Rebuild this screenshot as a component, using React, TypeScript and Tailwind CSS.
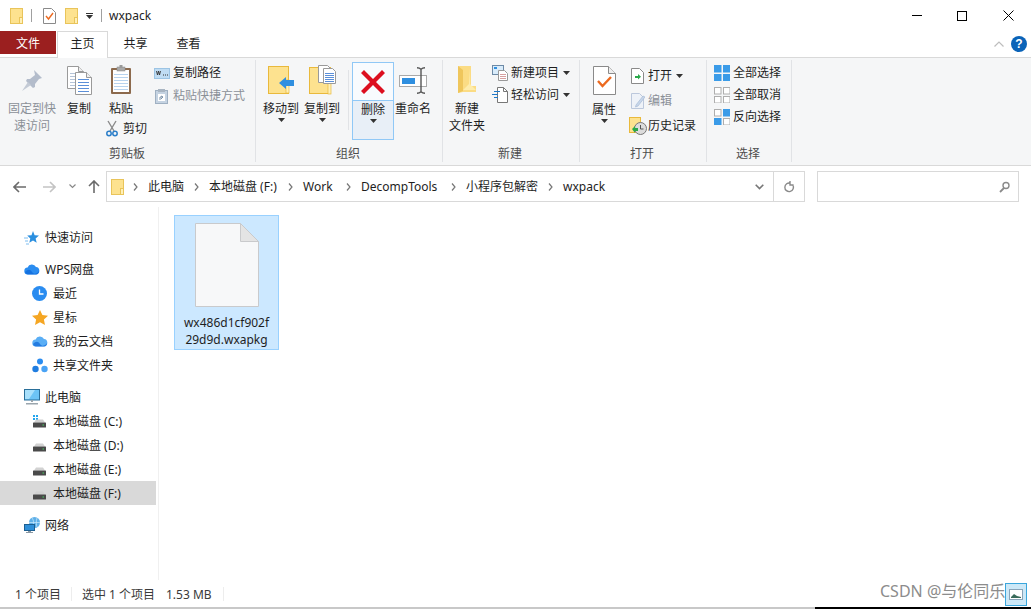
import React from "react";

const Sv = ({ w, h, children, className = "" }: { w: number; h: number; children: React.ReactNode; className?: string }) => (
  <svg width={w} height={h} viewBox={`0 0 ${w} ${h}`} className={`block shrink-0 ${className}`}>{children}</svg>
);

const Folder = ({ w = 13, h = 16 }: { w?: number; h?: number }) => (
  <Sv w={w} h={h}>
    <rect x=".5" y=".5" width={w - 1} height={h - 1} fill="#fde28f" stroke="#e9c45a" />
    <rect x={w - 3.5} y={h - 6.5} width="3" height="6" fill="#fff0b8" stroke="#e9c45a" />
  </Sv>
);
const Caret = ({ className = "" }: { className?: string }) => (
  <Sv w={7} h={4} className={className}><path d="M0 0h7L3.5 4z" fill="#333" /></Sv>
);
const PageLines = ({ x, y, blue = false }: { x: number; y: number; blue?: boolean }) => (
  <g>
    <path d={`M${x + .5} ${y + .5}h11l5 5v17h-16z`} fill="#fff" stroke="#9a9a9a" />
    <path d={`M${x + 11.5} ${y + .5}v5h5`} fill="#eee" stroke="#9a9a9a" />
    {[7, 10, 13, 16, 19].map((d) => <path key={d} d={`M${x + 3} ${y + d + .5}h11`} stroke={blue ? "#5b8fd8" : "#b5c4d8"} />)}
  </g>
);
const ICopy = () => (
  <Sv w={25} h={29}>
    <PageLines x={0} y={0} />
    <PageLines x={8} y={6} blue />
  </Sv>
);
const IPaste = () => (
  <Sv w={22} h={30}>
    <rect x="1" y="3" width="20" height="26" rx="1" fill="#8c6a4d" />
    <rect x="3" y="5" width="16" height="22" fill="#fff" />
    {[9, 12, 15, 18, 21, 24].map((d) => <path key={d} d={`M4 ${d + .5}h14`} stroke="#b8d3ee" />)}
    <rect x="7" y="2" width="8" height="4" fill="#a9a9a9" stroke="#888" strokeWidth=".5" />
    <rect x="9.5" y="0" width="3" height="3" fill="#999" />
  </Sv>
);
const IPin = () => (
  <Sv w={22} h={23}>
    <path d="M13 1l8 8-3 1-4 5 0 3-2 1-7-7 1-2 3 0 5-4z" fill="#b3bccb" />
    <path d="M7 13l-6 9 9-6z" fill="#c3cad5" />
  </Sv>
);
const ICut = () => (
  <Sv w={12} h={17}>
    <path d="M2 1l6 10M10 1L4 11" stroke="#8a8a8a" strokeWidth="1.4" fill="none" />
    <circle cx="3" cy="13.5" r="2.2" fill="none" stroke="#2b7ec9" strokeWidth="1.5" />
    <circle cx="9" cy="13.5" r="2.2" fill="none" stroke="#2b7ec9" strokeWidth="1.5" />
  </Sv>
);
const ICopyPath = () => (
  <Sv w={16} h={11}>
    <rect x=".5" y=".5" width="15" height="10" fill="#bfdcf3" stroke="#9cc4e4" />
    <path d="M2.5 3l1 4 1-4 1 4 1-4" stroke="#333" fill="none" strokeWidth=".9" />
    <path d="M9 7h1M11 7h1M13 7h1" stroke="#333" />
  </Sv>
);
const IPasteShortcut = () => (
  <Sv w={13} h={15}>
    <rect x=".5" y="1.5" width="12" height="13" fill="#c5d3e2" stroke="#9fb0c2" />
    <rect x="3" y="0" width="7" height="3" fill="#a9b5c2" />
    <rect x="3" y="5" width="7" height="7" fill="#fff" />
    <path d="M5 11V8h3M6 7l2 1-2 2" stroke="#7d93aa" fill="none" />
  </Sv>
);
const IMove = () => (
  <Sv w={27} h={29}>
    <rect x=".5" y=".5" width="20" height="27" fill="#fde28f" stroke="#e9b93c" />
    <rect x="18" y="14" width="3" height="13" fill="#fff0b8" stroke="#e9b93c" strokeWidth=".7" />
    <path d="M11 17l7-6v3h8v6h-8v3z" fill="#2f8fe0" />
  </Sv>
);
const ICopyTo = () => (
  <Sv w={27} h={30}>
    <rect x=".5" y="2.5" width="21" height="26" fill="#fde28f" stroke="#e9b93c" />
    <rect x="19" y="17" width="3" height="12" fill="#fff0b8" stroke="#e9b93c" strokeWidth=".7" />
    <path d="M9.5 .5h9l4 4v13h-13z" fill="#fff" stroke="#9a9a9a" />
    <path d="M14.5 3.5h9l3 3v12h-12z" fill="#fff" stroke="#9a9a9a" />
    {[8, 10, 12, 14, 16].map((d) => <path key={d} d={`M16 ${d + .5}h9`} stroke="#5b8fd8" />)}
  </Sv>
);
const IDelete = () => (
  <Sv w={26} h={26}>
    <path d="M4 1L13 10 22 1 25 4 16 13 25 22 22 25 13 16 4 25 1 22 10 13 1 4z" fill="#dc0f20" />
  </Sv>
);
const IRename = () => (
  <Sv w={28} h={27}>
    <rect x=".5" y="8.5" width="27" height="11" fill="#fff" stroke="#a9a9a9" />
    <rect x="3" y="11" width="13" height="6" fill="#2f8fe0" />
    <path d="M18 .7c2 0 3 .5 4 1.5 1-1 2-1.5 4-1.5M22 2.2v22.6M18 26.3c2 0 3-.5 4-1.5 1 1 2 1.5 4 1.5" stroke="#555" strokeWidth="1.4" fill="none" />
  </Sv>
);
const INewFolder = () => (
  <Sv w={20} h={28}>
    <path d="M1 0h13v20l5 0v6H6l-5 1z" fill="#fbdc84" />
    <path d="M12 2l1 16 6 6H6l6-6z" fill="#fff0b5" opacity=".8" />
    <path d="M1 0v27l5-2V4z" fill="#efc65c" />
  </Sv>
);
const INewItem = () => (
  <Sv w={16} h={16}>
    <rect x=".5" y=".5" width="11" height="9" fill="#d9ecfb" stroke="#6d8aa6" />
    <rect x="2" y="2" width="3" height="2" fill="#2f8fe0" />
    <path d="M6.5 5.5h6l3 3v7h-9z" fill="#fff" stroke="#999" />
    <path d="M8 9.5h6M8 11.5h6M8 13.5h6" stroke="#d8a0a0" />
  </Sv>
);
const IEasy = () => (
  <Sv w={16} h={16}>
    <path d="M5.5 .5h6l4 4v11h-10z" fill="#fff" stroke="#777" />
    <path d="M11.5 .5v4h4" fill="none" stroke="#777" />
    <path d="M2 4.5h6M0 7.5h6M2 10.5h4" stroke="#1f78c8" />
  </Sv>
);
const IProps = () => (
  <Sv w={23} h={29}>
    <path d="M.5 .5h15l7 7v21H.5z" fill="#fff" stroke="#8a8a8a" />
    <path d="M15.5 .5v7h7" fill="#eee" stroke="#8a8a8a" />
    <path d="M5 15l4.5 5L18 11" stroke="#ec6a20" strokeWidth="2.4" fill="none" />
  </Sv>
);
const IOpen = () => (
  <Sv w={13} h={16}>
    <path d="M.5 .5h8l4 4v11H.5z" fill="#fff" stroke="#8a8a8a" />
    <path d="M4 8h3V6l3 2.8L7 11.5V10H4z" fill="#2aa84a" />
  </Sv>
);
const IEdit = () => (
  <Sv w={14} h={16}>
    <path d="M.5 .5h8l4 4v11H.5z" fill="#eef2f8" stroke="#bcc8dc" />
    <path d="M5 12l7-9 2 1-7 9-2.5 1z" fill="#c7d6ea" stroke="#a8bcd6" strokeWidth=".7" />
  </Sv>
);
const IHistory = () => (
  <Sv w={18} h={18}>
    <rect x=".5" y=".5" width="11" height="15" fill="#fde28f" stroke="#e9b93c" />
    <circle cx="11.5" cy="11.5" r="6" fill="#dcdcdc" stroke="#777" />
    <path d="M11.5 8v4h3" stroke="#555" fill="none" />
    <path d="M3 12l3-3v2h3v3H6v2z" fill="#2aa84a" />
  </Sv>
);
const Grid = ({ on }: { on: number[] }) => (
  <Sv w={16} h={16}>
    {[[0, 0], [9, 0], [0, 9], [9, 9]].map(([x, y], i) => (
      <rect key={i} x={x + .5} y={y + .5} width="6.5" height="6.5"
        fill={on.includes(i) ? "#3a9be8" : "#fff"} stroke={on.includes(i) ? "#3a9be8" : "#aeaeae"} />
    ))}
  </Sv>
);

const Star = () => (
  <Sv w={15} h={15}>
    <path d="M9 1l1.6 4.2 4.4.3-3.4 2.9 1.1 4.4L9 10.5 5.3 12.8l1-4.4L3.2 5.5l4.3-.3z" fill="#2b8fdf" />
    <path d="M0 8h4M1 11h3M2 14h3" stroke="#7dbdf0" />
  </Sv>
);
const Cloud = ({ c = "#2a8cf0" }: { c?: string }) => (
  <Sv w={16} h={12}>
    <path d="M4 11.5a3.5 3.5 0 0 1-.4-7A4.6 4.6 0 0 1 12 4a3.8 3.8 0 0 1 .3 7.5z" fill={c} />
    <path d="M1 9c3-3 5-3 7 0s5 2 7-1c0 2-1 3.5-3 3.5H4C2.5 11.5 1.5 10.5 1 9z" fill="#0d66d8" opacity=".7" />
  </Sv>
);
const Clock = () => (
  <Sv w={15} h={15}>
    <circle cx="7.5" cy="7.5" r="7.5" fill="#2a8cf0" />
    <path d="M7.5 3.5v4.5h4" stroke="#fff" strokeWidth="1.3" fill="none" />
  </Sv>
);
const GoldStar = () => (
  <Sv w={16} h={15}>
    <path d="M8 0l2.4 5 5.6.7-4.1 3.8 1.1 5.5L8 12.3 3 15l1.1-5.5L0 5.7 5.6 5z" fill="#f5a623" />
  </Sv>
);
const Share = () => (
  <Sv w={16} h={15}>
    <circle cx="8" cy="3.5" r="3" fill="#2a8cf0" />
    <circle cx="3.5" cy="11" r="3.2" fill="#1f7de0" />
    <circle cx="12.5" cy="11" r="3.2" fill="#4aa3f5" />
  </Sv>
);
const Pc = () => (
  <Sv w={16} h={16}>
    <rect x=".5" y=".5" width="15" height="10.5" fill="#6cc4f5" stroke="#2a6f99" />
    <path d="M1 1h10L5 10H1z" fill="#a8e0fb" />
    <path d="M7 11h2v2H7zM2 14h12v1.5H2z" fill="#9aa5ad" />
  </Sv>
);
const Drive = ({ win = false }: { win?: boolean }) => (
  <Sv w={15} h={13}>
    {win && <path d="M1 0h2v2H1zM4 0h2v2H4zM1 3h2v2H1zM4 3h2v2H4z" fill="#22a5ee" />}
    <path d="M2 7.5L4 4.5h7l2 3z" fill={win ? "#cfcfcf" : "#d2d2d2"} />
    <rect x="1" y="7.5" width="13" height="5" rx=".5" fill="#4a4a4a" />
    <rect x="10.5" y="9.5" width="1.5" height="1" fill="#46d060" />
  </Sv>
);
const Net = () => (
  <Sv w={17} h={16}>
    <circle cx="10.5" cy="5.5" r="5.5" fill="#5fb0e8" />
    <path d="M8 1c2 2 2 7 0 9M13 1c-1 3-1 7 0 9M5 5.5h11" stroke="#cfe9fa" strokeWidth=".7" fill="none" />
    <rect x=".5" y="7.5" width="10" height="6" fill="#2f8fd8" stroke="#1d5f91" />
    <path d="M4 14h3v1H4zM2 15h7v1H2z" fill="#8a98a3" />
  </Sv>
);

const Chevron = () => (
  <Sv w={5} h={8}><path d="M1 .5l3 3.5-3 3.5" stroke="#777" strokeWidth="1.2" fill="none" /></Sv>
);

const Large = ({ w, icon, lines, caret, gray, iconH = 40 }: { w: number; icon: React.ReactNode; lines: string[]; caret?: boolean; gray?: boolean; iconH?: number }) => (
  <div className="flex flex-col items-center shrink-0" style={{ width: w }}>
    <div className="flex items-center justify-center" style={{ height: iconH }}>{icon}</div>
    {lines.map((l) => (
      <div key={l} className={`h-[17px] leading-[17px] whitespace-nowrap ${gray ? "text-[#8b9097]" : ""}`}>{l}</div>
    ))}
    {caret && <Caret className="mt-[1px]" />}
  </div>
);

const Small = ({ icon, label, caret, gray, h = 22, iw = 19 }: { icon: React.ReactNode; label: string; caret?: boolean; gray?: boolean; h?: number; iw?: number }) => (
  <div className="flex items-center" style={{ height: h }}>
    <div className="flex justify-start" style={{ width: iw }}>{icon}</div>
    <span className={`whitespace-nowrap ${gray ? "text-[#8b9097]" : ""}`}>{label}</span>
    {caret && <Caret className="ml-[4px]" />}
  </div>
);

const Group = ({ w, label, children, cx }: { w: number; label: string; children: React.ReactNode; cx?: number }) => (
  <div className="flex flex-col shrink-0 h-[102px] mt-[2px] border-r border-[#e1e3e6]" style={{ width: w }}>
    <div className="h-[85px] flex items-start">{children}</div>
    <div className="h-[17px] leading-[17px] text-[#4d4d4d] text-center" style={cx ? { width: cx * 2 } : undefined}>{label}</div>
  </div>
);

const Row = ({ icon, label, sel, deep, top }: { icon: React.ReactNode; label: string; sel?: boolean; deep?: boolean; top?: boolean }) => (
  <div className={`h-6 flex items-center w-[156px] ${sel ? "bg-[#d9d9d9]" : ""} ${top ? "mt-2" : ""} ${deep ? "pl-[32px]" : "pl-[24px]"}`}>
    <div className="w-[21px]">{icon}</div>
    <span className="whitespace-nowrap pt-[2px]">{label}</span>
  </div>
);

const Crumb = ({ children, w }: { children: React.ReactNode; w: number }) => (
  <>
    <Chevron />
    <span className="mx-[10px] whitespace-nowrap" style={{ width: w }}>{children}</span>
  </>
);

export default function App() {
  return (
    <div className="relative w-[1031px] h-[609px] overflow-hidden bg-white text-[12px] leading-none text-[#1e1e1e] font-['Noto_Sans','Noto_Sans_CJK_SC',sans-serif]">
      {/* title bar */}
      <div className="h-[31px] flex items-center pl-[10px]">
        <Folder />
        <div className="w-px h-[13px] bg-[#a0a0a0] ml-[8px] mr-[11px]" />
        <Sv w={13} h={16}>
          <path d="M.5 .5h8l4 4v11H.5z" fill="#fff" stroke="#8a8a8a" />
          <path d="M3 8l2.5 3L10 5" stroke="#ec6a20" strokeWidth="1.4" fill="none" />
        </Sv>
        <div className="ml-[9px]"><Folder w={13} /></div>
        <div className="ml-[8px] flex flex-col items-center gap-[1px]">
          <div className="w-[7px] h-px bg-[#333]" />
          <Caret />
        </div>
        <div className="w-px h-[13px] bg-[#a0a0a0] ml-[8px] mr-[7px]" />
        <span className="text-[12px]">wxpack</span>
        <div className="ml-auto flex items-center">
          <div className="w-[10px] h-px bg-black mr-[35px]" />
          <div className="w-[10px] h-[10px] border border-black mr-[36px]" />
          <Sv w={11} h={11} className="mr-[17px]"><path d="M.5.5l10 10M10.5.5l-10 10" stroke="#000" /></Sv>
        </div>
      </div>

      {/* tabs */}
      <div className="h-[26px] flex items-start relative z-10">
        <div className="w-[56px] h-[23px] bg-[#9b1f1f] text-white flex items-center justify-center pt-[2px]">文件</div>
        <div className="w-[51px] h-[27px] ml-px bg-white border border-b-0 border-[#d9d9d9] flex items-center justify-center pb-[2px]">主页</div>
        <div className="w-[53px] h-[23px] flex items-center justify-center ml-[1px] pt-[2px]">共享</div>
        <div className="w-[53px] h-[23px] flex items-center justify-center pt-[2px]">查看</div>
        <div className="ml-auto flex items-center gap-[7px] pr-[4px] pt-[5px]">
          <Sv w={10} h={6}><path d="M.5 5.5L5 1l4.5 4.5" stroke="#bdbdbd" strokeWidth="1.2" fill="none" /></Sv>
          <div className="w-4 h-4 rounded-full bg-[#0a63b8] text-white flex items-center justify-center font-bold text-[12px] font-['Liberation_Sans',sans-serif]">?</div>
        </div>
      </div>

      {/* ribbon */}
      <div className="h-[109px] bg-[#f5f6f7] border-y border-[#d9d9d9] flex items-start">
        <Group w={256} label="剪贴板" cx={127}>
          <div className="pl-[8px]"><Large w={48} icon={<IPin />} lines={["固定到快", "速访问"]} gray /></div>
          <div className="ml-[3px]"><Large w={40} icon={<ICopy />} lines={["复制"]} /></div>
          <div className="-ml-[3px] flex flex-col w-[50px] items-center">
            <Large w={40} icon={<IPaste />} lines={["粘贴"]} />
            <div className="flex items-center mt-[3px] gap-[5px] self-start ml-[10px]"><ICut /><span className="whitespace-nowrap">剪切</span></div>
          </div>
          <div className="ml-[8px] pt-[2px] flex flex-col">
            <Small icon={<ICopyPath />} label="复制路径" />
            <div className="mt-[1px] pl-px"><Small iw={18} icon={<IPasteShortcut />} label="粘贴快捷方式" gray /></div>
          </div>
        </Group>
        <Group w={187} label="组织" cx={92}>
          <div className="ml-[4px]"><Large w={42} icon={<IMove />} lines={["移动到"]} caret /></div>
          <Large w={40} icon={<ICopyTo />} lines={["复制到"]} caret />
          <div className="w-px h-[60px] bg-[#e1e3e6] mt-[10px] ml-[6px]" />
          <div className="w-[42px] h-[78px] ml-[3px] mt-[2px] border border-[#90c8f6] flex flex-col items-center">
            <div className="h-[38px] w-full flex items-center justify-center border-b border-[#90c8f6] bg-[#f8fbfe]"><IDelete /></div>
            <div className="flex-1 w-full bg-[#e8eff7] flex flex-col items-center">
              <div className="h-[17px] leading-[17px]">删除</div>
              <Caret className="mt-[1px]" />
            </div>
          </div>
          <div className="-ml-px"><Large w={40} icon={<IRename />} lines={["重命名"]} /></div>
        </Group>
        <Group w={137} label="新建" cx={67}>
          <div className="ml-[4px]"><Large w={40} icon={<INewFolder />} lines={["新建", "文件夹"]} /></div>
          <div className="ml-[5px] pt-[2px] flex flex-col">
            <Small icon={<INewItem />} label="新建项目" caret />
            <Small icon={<IEasy />} label="轻松访问" caret />
          </div>
        </Group>
        <Group w={127} label="打开" cx={62}>
          <div className="ml-[4px]"><Large w={40} icon={<IProps />} lines={["属性"]} caret iconH={41} /></div>
          <div className="ml-[7px] pt-[5px] flex flex-col gap-[3px]">
            <Small icon={<IOpen />} label="打开" caret h={22} iw={17} />
            <Small icon={<IEdit />} label="编辑" gray h={22} iw={17} />
            <div className="flex items-center h-[22px] -ml-[2px]">
              <IHistory />
              <span className="whitespace-nowrap ml-px">历史记录</span>
            </div>
          </div>
        </Group>
        <Group w={85} label="选择" cx={41}>
          <div className="ml-[7px] pt-[2px] flex flex-col">
            <Small icon={<Grid on={[0, 1, 2, 3]} />} label="全部选择" />
            <Small icon={<Grid on={[]} />} label="全部取消" />
            <Small icon={<Grid on={[1, 2]} />} label="反向选择" />
          </div>
        </Group>
      </div>

      {/* address bar */}
      <div className="h-[41px] flex items-start pt-[5px]">
        <div className="w-[106px] h-[31px] flex items-center shrink-0 pl-[13px]">
          <Sv w={13} h={12}><path d="M6 1L1 6l5 5M1 6h12" stroke="#6b6b6b" strokeWidth="1.6" fill="none" /></Sv>
          <Sv w={13} h={12} className="ml-[17px]"><path d="M7 1l5 5-5 5M12 6H0" stroke="#c4c4c4" strokeWidth="1.6" fill="none" /></Sv>
          <Sv w={7} h={5} className="ml-[13px]"><path d="M.5.5L3.5 3.5 6.5.5" stroke="#888" strokeWidth="1.2" fill="none" /></Sv>
          <Sv w={12} h={13} className="ml-[12px]"><path d="M1 6l5-5 5 5M6 1v12" stroke="#6b6b6b" strokeWidth="1.6" fill="none" /></Sv>
        </div>
        <div className="w-[699px] h-[31px] border border-[#d9d9d9] flex items-center shrink-0">
          <div className="pl-[4px] pr-[9px]"><Folder w={13} h={16} /></div>
          <div className="flex items-center flex-1 min-w-0">
            <Crumb w={36}>此电脑</Crumb>
            <Crumb w={69}>本地磁盘 (F:)</Crumb>
            <Crumb w={33}>Work</Crumb>
            <Crumb w={80}>DecompTools</Crumb>
            <Crumb w={72}>小程序包解密</Crumb>
            <Crumb w={44}>wxpack</Crumb>
          </div>
          <Sv w={9} h={6} className="mr-[9px]"><path d="M.7.7L4.5 4.5 8.3.7" stroke="#777" strokeWidth="1.6" fill="none" /></Sv>
          <div className="w-[31px] h-full border-l border-[#d9d9d9] flex items-center justify-center">
            <Sv w={11} h={12}><path d="M8.8 4a4.3 4.3 0 1 1-2.3-1.8M6 0v4h3.6" stroke="#8a8a8a" strokeWidth="1.4" fill="none" /></Sv>
          </div>
        </div>
        <div className="ml-[12px] w-[202px] h-[31px] border border-[#d9d9d9] flex items-center justify-end pr-[8px] shrink-0">
          <Sv w={11} h={12}><circle cx="7" cy="4.5" r="3" fill="none" stroke="#8a8a8a" strokeWidth="1.4" /><path d="M5 7l-4 4" stroke="#8a8a8a" strokeWidth="1.8" /></Sv>
        </div>
      </div>

      {/* body */}
      <div className="h-[373px] flex">
        <div className="w-[159px] border-r border-[#f0f0f0] pt-[18px] shrink-0">
          <Row icon={<Star />} label="快速访问" />
          <Row top icon={<Cloud />} label="WPS网盘" />
          <Row deep icon={<Clock />} label="最近" />
          <Row deep icon={<GoldStar />} label="星标" />
          <Row deep icon={<Cloud c="#5aaef5" />} label="我的云文档" />
          <Row deep icon={<Share />} label="共享文件夹" />
          <Row top icon={<Pc />} label="此电脑" />
          <Row deep icon={<Drive win />} label="本地磁盘 (C:)" />
          <Row deep icon={<Drive />} label="本地磁盘 (D:)" />
          <Row deep icon={<Drive />} label="本地磁盘 (E:)" />
          <Row deep sel icon={<Drive />} label="本地磁盘 (F:)" />
          <Row top icon={<Net />} label="网络" />
        </div>
        <div className="pl-[15px] pt-[8px]">
          <div className="w-[105px] h-[135px] bg-[#cce8ff] border border-[#99d1ff] flex flex-col items-center pt-[7px]">
            <Sv w={64} h={84}>
              <path d="M.5 .5h45l18 18v65H.5z" fill="#f7f8f9" stroke="#c9cacc" />
              <path d="M45.5 .5v18h18z" fill="#e4e4e4" stroke="#c9cacc" />
            </Sv>
            <div className="mt-[7px] w-full text-center text-[#1e1e1e] leading-[17px] break-all px-[8px]">wx486d1cf902f<br />29d9d.wxapkg</div>
          </div>
        </div>
      </div>

      {/* status */}
      <div className="h-[27px] flex items-center pl-[15px] text-[#3a3a3a]">
        <span className="w-[56px] whitespace-nowrap pt-[2px]">1 个项目</span>
        <div className="w-px h-[14px] bg-[#ededed]" />
        <span className="ml-[10px] w-[84px] whitespace-nowrap pt-[2px]">选中 1 个项目</span>
        <span className="whitespace-nowrap w-[57px] pt-[2px]">1.53 MB</span>
        <div className="w-px h-[14px] bg-[#ededed]" />
      </div>

      {/* bottom edge */}
      <div className="h-[2px] flex">
        <div className="w-[815px] bg-[#c8c8c8]" />
        <div className="flex-1 bg-black" />
      </div>

      {/* view toggle + watermark lie over the status bar */}
      <div className="absolute left-[1005px] top-[583px] w-[22px] h-[23px] border border-[#3aa6dc] bg-[#cce8f7] flex items-center justify-center">
        <Sv w={14} h={11}>
          <rect x=".5" y=".5" width="13" height="10" fill="#fff" stroke="#8aa4b8" />
          <path d="M2 8l3-3 3 2 4 1v1H2z" fill="#3a6b5a" />
        </Sv>
      </div>
      <div className="absolute left-[880px] top-[580px] text-[16px] leading-[22px] text-[#808080] opacity-90 whitespace-nowrap">CSDN @与伦同乐</div>
    </div>
  );
}
